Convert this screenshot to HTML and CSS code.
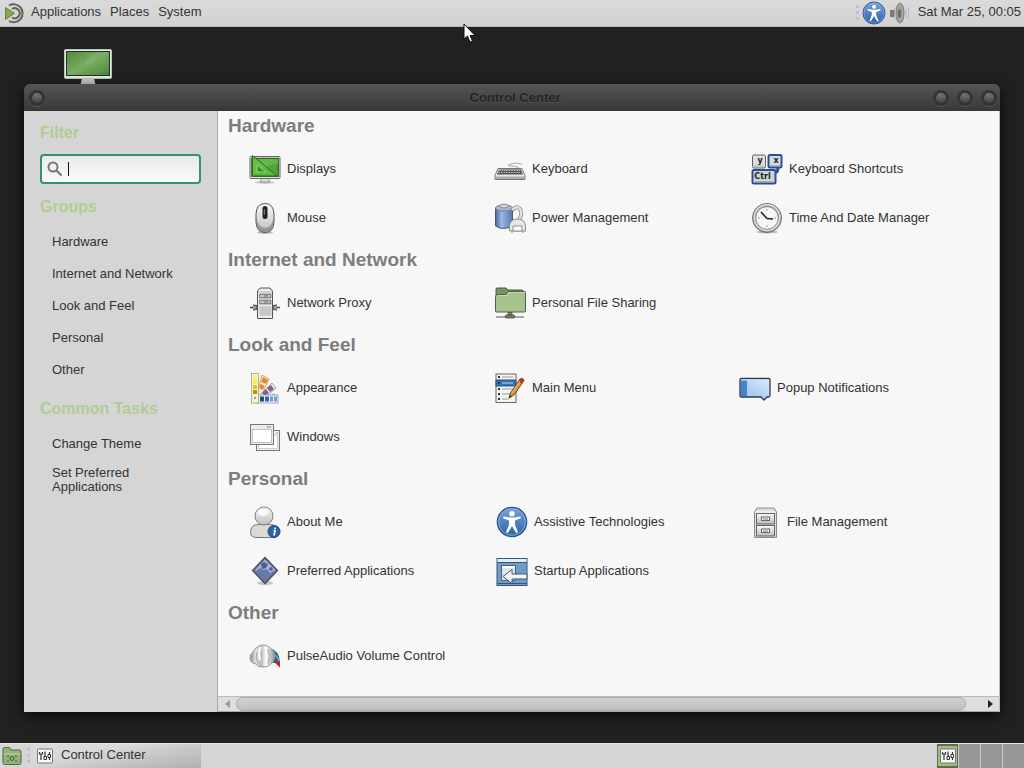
FILE: index.html
```
<!DOCTYPE html>
<html lang="en">
<head>
    <meta charset="UTF-8">
    <meta name="viewport" content="width=device-width, initial-scale=1.0">
    <title>Control Center</title>
    <link rel="stylesheet" href="styles.css">
</head>
<body>
<!-- shared gradients and symbols -->
<svg class="defs" aria-hidden="true">
    <defs>
        <linearGradient id="g-blue" x1="0" y1="0" x2="0" y2="1"><stop offset="0" stop-color="#7aa3da"/><stop offset="1" stop-color="#2c5fa8"/></linearGradient>
        <linearGradient id="g-green" x1="0" y1="0" x2="1" y2="1"><stop offset="0" stop-color="#4f8a3c"/><stop offset="0.5" stop-color="#78ad62"/><stop offset="1" stop-color="#4a8538"/></linearGradient>
        <linearGradient id="g-grey" x1="0" y1="0" x2="0" y2="1"><stop offset="0" stop-color="#fafafa"/><stop offset="1" stop-color="#bdbdb8"/></linearGradient>
        <linearGradient id="g-metal" x1="0" y1="0" x2="1" y2="0"><stop offset="0" stop-color="#8d8d8d"/><stop offset="0.25" stop-color="#e8e8e8"/><stop offset="0.45" stop-color="#b5b5b5"/><stop offset="0.65" stop-color="#fff"/><stop offset="1" stop-color="#929292"/></linearGradient>
        <linearGradient id="g-drum" x1="0" y1="0" x2="1" y2="0"><stop offset="0" stop-color="#46659f"/><stop offset="0.35" stop-color="#9db7e2"/><stop offset="1" stop-color="#5577b4"/></linearGradient>
        <linearGradient id="g-sky" x1="0" y1="1" x2="1" y2="0"><stop offset="0" stop-color="#8dbdf0"/><stop offset="1" stop-color="#dcebfa"/></linearGradient>
    </defs>
    <symbol id="access" viewBox="0 0 32 32">
        <circle cx="16" cy="16" r="14.7" fill="url(#g-blue)" stroke="#24508f" stroke-width="1.2"/>
        <circle cx="16" cy="16" r="13.4" fill="none" stroke="#93b5e2" stroke-width="0.8"/>
        <circle cx="16" cy="7.7" r="2.7" fill="#fff"/>
        <path d="M7.500 10.500l6.500 1h4l6.500-1 .4 1.800-6 2.200v4.200l3.200 7.500-2 .8L16 20l-4.100 7-2-.8 3.200-7.500v-4.200l-6-2.200z" fill="#fff"/>
    </symbol>
    <symbol id="tools" viewBox="0 0 16 16">
        <rect x="0.5" y="1" width="15" height="14" rx="1" fill="#f8f8f6" stroke="#777"/>
        <path d="M2.500 4v2h3V4M4 6v6M8 3.500V8M12.500 4v2M12.500 10v2" fill="none" stroke="#333" stroke-width="1.200"/>
        <path d="M7 8.500h2.500v3H7zM11 6.500h2.500v3H11z" fill="#fff" stroke="#333"/>
    </symbol>
</svg>

<div class="desktop">
    <header class="panel">
        <svg class="logo" viewBox="0 0 22 22" aria-hidden="true">
            <path d="M6 3.500A9 9 0 1 1 6 19" fill="none" stroke="#5d6653" stroke-width="2"/>
            <path d="M9 7A5 5 0 1 1 9 15.500" fill="none" stroke="#5d6653" stroke-width="2"/>
            <path d="M2.500 5.500l9 5.800-9 6.200z" fill="#87a752" stroke="#66803f"/>
        </svg>
        <nav class="menus">
            <button class="menu">Applications</button>
            <button class="menu">Places</button>
            <button class="menu">System</button>
        </nav>
        <div class="tray">
            <span class="grip"></span>
            <svg class="tray-icon" viewBox="0 0 32 32" aria-hidden="true"><use href="#access"/></svg>
            <svg class="tray-icon" viewBox="0 0 24 24" aria-hidden="true">
                <path d="M4 9h4v7H4z" fill="#777"/>
                <path d="M8 8.500L13 3v18L8 16.500z" fill="url(#g-metal)" stroke="#888" stroke-width="0.500"/>
                <ellipse cx="14" cy="12" rx="4" ry="10" fill="#a5a5a0" stroke="#7d7d78"/>
                <ellipse cx="13.500" cy="12.500" rx="1.700" ry="4.500" fill="#6d6d69"/>
                <path d="M20 8v8M22.500 6v12" stroke="#b3bdc9" stroke-width="1"/>
            </svg>
            <time class="clock">Sat Mar 25, 00:05</time>
        </div>
    </header>

    <main class="workspace">
        <svg class="computer" viewBox="0 0 48 38" aria-hidden="true">
            <path d="M18 29h12l2 9H16z" fill="#c8c8c8"/>
            <rect x="0.500" y="0.500" width="47" height="29" rx="1" fill="#e9ebe6" stroke="#bfc1bc"/>
            <rect x="2.500" y="2.500" width="43" height="24" fill="url(#g-green)" stroke="#22301d"/>
            <path d="M20 14Q26 4 38 3q-8 6-9 13-3-2-9-2z" fill="#8ab775" opacity=".45"/>
        </svg>

        <section class="window">
            <div class="titlebar">
                <button class="knob" aria-label="Window menu"></button>
                <h1 class="title">Control Center</h1>
                <button class="knob" aria-label="Minimize"></button>
                <button class="knob" aria-label="Maximize"></button>
                <button class="knob" aria-label="Close"></button>
            </div>
            <div class="window-body">
                <aside class="sidebar">
                    <h2 class="side-title"><label for="filter">Filter</label></h2>
                    <div class="search">
                        <svg class="search-icon" viewBox="0 0 16 16" aria-hidden="true"><circle cx="6" cy="6" r="4.500" fill="none" stroke="#777" stroke-width="2"/><path d="M9.500 9.500l5 5" stroke="#777" stroke-width="2.200"/></svg>
                        <input id="filter" class="search-input" type="text">
                        <span class="caret"></span>
                    </div>
                    <h2 class="side-title">Groups</h2>
                    <ul class="links">
                        <li><a href="#hardware">Hardware</a></li>
                        <li><a href="#internet">Internet and Network</a></li>
                        <li><a href="#look">Look and Feel</a></li>
                        <li><a href="#personal">Personal</a></li>
                        <li><a href="#other">Other</a></li>
                    </ul>
                    <h2 class="side-title">Common Tasks</h2>
                    <ul class="links tasks">
                        <li><a href="#look">Change Theme</a></li>
                        <li><a href="#personal">Set Preferred Applications</a></li>
                    </ul>
                </aside>

                <div class="content">
                    <div class="groups">
                        <section class="group hardware" id="hardware">
                            <h2>Hardware</h2>
                            <div class="items">
                                <a class="item" href="#">
                                    <svg class="icon" viewBox="0 0 32 32"><ellipse cx="16" cy="29.500" rx="10" ry="1.500" fill="#ccc"/><path d="M13 25h6l2 4H11z" fill="#ddd" stroke="#777" stroke-width=".7"/><rect x="1" y="3.500" width="30" height="22" rx="1" fill="#e8e8e4" stroke="#666"/><rect x="2.800" y="5.300" width="26.500" height="18" fill="#4fa634" stroke="#204d17"/><path d="M3 6h26v5Q17 11 10 20H3z" fill="#78bf5c" opacity=".6"/><path d="M3.500 2.500v20.500h24.500z" fill="#67c446" fill-opacity=".6" stroke="#286f17"/><path d="M8 12v7h9z" fill="#358f23" stroke="#a7df8e" stroke-width=".8"/></svg>
                                    <span>Displays</span>
                                </a>
                                <a class="item" href="#">
                                    <svg class="icon" viewBox="0 0 32 32"><path d="M25 15q-2-2-8-2t0-2 11 0" fill="none" stroke="#aaa"/><path d="M4 15.500h24l3 7v4H1v-4z" fill="#e8e8e6" stroke="#777"/><path d="M5 16.500h22l2 5H3z" fill="#555"/><path d="M5 17.500h21M4.500 19.500h23" stroke="#bbb" stroke-width="1" stroke-dasharray="1.500 1"/><path d="M1.500 23.500h29v2.500h-29z" fill="#aaa"/></svg>
                                    <span>Keyboard</span>
                                </a>
                                <a class="item" href="#">
                                    <svg class="icon" viewBox="0 0 32 32"><path d="M27 15q0 5-5 5" fill="none" stroke="#2d4f91" stroke-width="3"/><rect x="1.500" y="2" width="13" height="13" rx="1.500" fill="#dcdfdb" stroke="#5d6470"/><rect x="17.500" y="2" width="13" height="12.500" rx="1.500" fill="#d5dadd" stroke="#2d4f91" stroke-width="2"/><rect x="1.500" y="17" width="23" height="13.500" rx="1.500" fill="#cfd4d7" stroke="#2d4f91" stroke-width="2"/><path d="M3 13h10M19 12.500h10M4 28.500h18" stroke="#aab0b5" stroke-width="1"/><g class="key-text"><text x="9" y="10">y</text><text x="25" y="10">x</text><text x="11.500" y="26">Ctrl</text></g></svg>
                                    <span>Keyboard Shortcuts</span>
                                </a>
                                <a class="item" href="#">
                                    <svg class="icon" viewBox="0 0 32 32"><ellipse cx="16" cy="30.500" rx="8" ry="1.500" fill="#bbb"/><path d="M7 12Q7.500 1.500 16 1.500T25 12v8Q24.500 30.500 16 30.500T7 20z" fill="url(#g-grey)" stroke="#555"/><path d="M7.500 15v7q2 8 8.500 8t8.500-8v-7Q23 26 16 26T7.500 15z" fill="#777" opacity=".6"/><rect x="13.500" y="4" width="5" height="13" rx="2.500" fill="#222"/><path d="M15.300 7v6" stroke="#888"/></svg>
                                    <span>Mouse</span>
                                </a>
                                <a class="item" href="#">
                                    <svg class="icon" viewBox="0 0 32 32"><path d="M1.500 6v18q7 5 17 0V6z" fill="url(#g-drum)" stroke="#455778"/><ellipse cx="10" cy="6" rx="8.500" ry="3" fill="#a9bad5" stroke="#788391"/><ellipse cx="10" cy="4" rx="4" ry="2" fill="#d8dad5" stroke="#888"/><path d="M18 8q5-5 8-1t-1 11" fill="none" stroke="#8e948e" stroke-width="4"/><path d="M18 8q5-5 8-1t-1 11" fill="none" stroke="#dfe1dc" stroke-width="2.400"/><path d="M15.500 25q0-8 8-8t8 8v4h-16z" fill="#e7e7e3" stroke="#8e918b"/><path d="M19 24h9v5h-9zM18 29v2M29 29v2" fill="#fff" stroke="#8e918b"/></svg>
                                    <span>Power Management</span>
                                </a>
                                <a class="item" href="#">
                                    <svg class="icon" viewBox="0 0 32 32"><ellipse cx="16" cy="30" rx="11" ry="1.500" fill="#bbb"/><circle cx="16" cy="16" r="14.500" fill="#a3a3a0" stroke="#6f6f6d"/><circle cx="16" cy="15.500" r="12.800" fill="none" stroke="#e8e8e6" stroke-width="1.200"/><circle cx="16" cy="16" r="11.300" fill="#f6f6f4" stroke="#90908e"/><path d="M16 7v1.500M16 23.500V25M7 16h1.500M23.500 16H25" stroke="#888"/><path d="M10 10l6 6.500 6 .5" fill="none" stroke="#222" stroke-width="1.600"/></svg>
                                    <span>Time And Date Manager</span>
                                </a>
                            </div>
                        </section>

                        <section class="group" id="internet">
                            <h2>Internet and Network</h2>
                            <div class="items">
                                <a class="item" href="#">
                                    <svg class="icon" viewBox="0 0 32 32"><path d="M1 20.500h30" stroke="#444" stroke-width="1.500"/><path d="M4 18l4 .5v4l-4 .5M28 18l-4 .5v4l4 .5" fill="#999" stroke="#444"/><path d="M8.500 31.500V4L11 1h10l2.500 3v27.500z" fill="#eaeae8" stroke="#555"/><path d="M9 5h14" stroke="#bbb"/><path d="M10.500 7h11.500v4H10.500zM10.500 13h11.500v4H10.500z" fill="#999" stroke="#666" stroke-width=".6"/><path d="M12 8v2M14 8v2M19 9h2M12 14v2M14 14v2M19 15h2" stroke="#eee"/><path d="M10.500 20h12M10.500 22h12M10.500 24h12M10.500 26h12M10.500 28h12" stroke="#888" stroke-dasharray="1 1"/><path d="M11.500 21h11M11.500 23h11M11.500 25h11M11.500 27h11" stroke="#aaa" stroke-dasharray="1 1"/></svg>
                                    <span>Network Proxy</span>
                                </a>
                                <a class="item" href="#">
                                    <svg class="icon" viewBox="0 0 32 32"><path d="M2 8V2q0-1 1-1h9l2 2h14q1 0 1 1v3" fill="#789264" stroke="#495a40"/><path d="M1.500 9.500Q1.500 7.500 4 7.500h8l2-3h16.500q1 0 1 1V24q0 1-1 1h-28q-1 0-1-1z" fill="#a6c28d" stroke="#4d6241"/><path d="M3 10q0-1.500 2-1.500h8l2-3h15" fill="none" stroke="#c7dbb5"/><path d="M14 25.500h4v3h-4z" fill="#789264" stroke="#444" stroke-width=".7"/><path d="M2 30h28" stroke="#555"/><rect x="11.500" y="28" width="9" height="3" rx="1" fill="#718563" stroke="#333" stroke-width=".7"/></svg>
                                    <span>Personal File Sharing</span>
                                </a>
                            </div>
                        </section>

                        <section class="group" id="look">
                            <h2>Look and Feel</h2>
                            <div class="items">
                                <a class="item" href="#">
                                    <svg class="icon" viewBox="0 0 32 32"><path d="M7 24L13 3l7 4-9 20z" fill="#f5e6d5" stroke="#bd8d60" stroke-width=".7"/><path d="M14 5l5 3-2 4-5-2zM11.500 12l4 2-1.500 4-4-2z" fill="#e38c2b"/><path d="M8 26L23 11l4 5-16 14z" fill="#eee" stroke="#888" stroke-width=".7"/><path d="M22 13l3 4-4 3-3-4zM17 17l3 4-4 3-3-3z" fill="#80648f"/><path d="M8 29L26 21v9H8z" fill="#bbb"/><rect x="7" y="23" width="22" height="8" fill="#eef1f5" stroke="#7d8ba0" stroke-width=".7"/><path d="M11 24.500h4v5h-4z" fill="#204a87"/><path d="M16 24.500h4v5h-4z" fill="#3465a4"/><path d="M21 24.500h3v5h-3zM25 24.500h3v5h-3z" fill="#729fcf"/><rect x="2.500" y="1.500" width="7" height="29.500" fill="#f7f4d4" stroke="#9b9367" stroke-width=".7"/><path d="M4 3h4v4H4z" fill="#fff27a"/><path d="M4 8h4v4H4z" fill="#fce94f"/><path d="M4 13h4v4H4z" fill="#e1c41d"/><path d="M4 18h4v4H4z" fill="#ae9512"/><circle cx="6" cy="26" r="1" fill="#777"/></svg>
                                    <span>Appearance</span>
                                </a>
                                <a class="item" href="#">
                                    <svg class="icon" viewBox="0 0 32 32"><rect x="2" y="2" width="20" height="28.500" fill="#f4f4f2" stroke="#666"/><path d="M2 8h20v6H2z" fill="#3674b1" stroke="#245486"/><path d="M4 5h2M4 11h2M4 17h2M4 22h2M4 27h2" stroke="#333" stroke-width="2"/><path d="M8 5h11M8 17h11M8 22h9M8 27h7" stroke="#999"/><path d="M8 11h11" stroke="#b5d1eb"/><path d="M15 26l1.500-5L26 7q3-2 4 1.500L20 23z" fill="#d49447" stroke="#76451c"/><path d="M26 7q3-2 4 1.500l-2 3-4-2z" fill="#b53b26"/><path d="M15 26l1-3 1.500 1.500z" fill="#222"/><path d="M18 21l8-12" stroke="#f0c578"/></svg>
                                    <span>Main Menu</span>
                                </a>
                                <a class="item" href="#">
                                    <svg class="icon" viewBox="0 0 32 32"><path d="M2.500 6.500h27q1.500 0 1.500 1.500v15.500q0 1.500-1.500 1.500h-1.500l-3 3-3-3H2.500Q1 25 1 23.500V8q0-1.500 1.500-1.500z" fill="url(#g-sky)" stroke="#2d3b53" stroke-width="1.300"/><path d="M2 8h6v16H2z" fill="#4583d1"/><path d="M2 8h28" stroke="#d8e7f8"/></svg>
                                    <span>Popup Notifications</span>
                                </a>
                                <a class="item" href="#">
                                    <svg class="icon" viewBox="0 0 32 32"><rect x="7.500" y="9.500" width="23" height="20" fill="#eee" stroke="#777"/><rect x="9.500" y="14" width="19" height="13.500" fill="#fff" stroke="#bbb" stroke-width=".7"/><path d="M27 12h2" stroke="#999"/><rect x="1.500" y="3.500" width="23" height="20" fill="#ececea" stroke="#777"/><rect x="3.500" y="8.500" width="19" height="13" fill="#fff" stroke="#aaa" stroke-width=".7"/><path d="M18 6h1.500M20.500 6H22" stroke="#888" stroke-width="1.300"/></svg>
                                    <span>Windows</span>
                                </a>
                            </div>
                        </section>

                        <section class="group personal" id="personal">
                            <h2>Personal</h2>
                            <div class="items">
                                <a class="item" href="#">
                                    <svg class="icon" viewBox="0 0 32 32"><path d="M1.500 26.500q0-8 8-8h12q7 0 7 8 0 5-6 5H8q-6.500 0-6.500-5z" fill="#d9dad2" stroke="#777"/><circle cx="15" cy="10" r="9" fill="url(#g-grey)" stroke="#7d7d78"/><ellipse cx="14" cy="6.500" rx="5" ry="3.500" fill="#fff" opacity=".8"/><circle cx="25" cy="25.500" r="6" fill="#2864ad" stroke="#1b4378"/><path d="M26 21.500V23M24.500 24.500H26l-1 5" fill="none" stroke="#fff" stroke-width="1.700"/></svg>
                                    <span>About Me</span>
                                </a>
                                <a class="item" href="#">
                                    <svg class="icon" viewBox="0 0 32 32"><use href="#access"/></svg>
                                    <span>Assistive Technologies</span>
                                </a>
                                <a class="item" href="#">
                                    <svg class="icon" viewBox="0 0 32 32"><path d="M5.500 31.500V6L8 2h17l2.500 4v25.500z" fill="#dededa" stroke="#8b8b86"/><path d="M7 6h19" stroke="#fff"/><rect x="7.500" y="7.500" width="18" height="10.500" fill="url(#g-grey)" stroke="#666"/><rect x="7.500" y="19.500" width="18" height="10.500" fill="url(#g-grey)" stroke="#666"/><rect x="12.500" y="11" width="8" height="3.500" fill="#fff" stroke="#666"/><rect x="12.500" y="23" width="8" height="3.500" fill="#fff" stroke="#666"/><path d="M14 13h5M14 25h5" stroke="#777"/></svg>
                                    <span>File Management</span>
                                </a>
                                <a class="item" href="#">
                                    <svg class="icon" viewBox="0 0 32 32"><ellipse cx="16" cy="28" rx="8" ry="2" fill="#c5c5c5"/><path d="M16 2.500L28.500 15.500 16 28.500 3.500 15.500z" fill="#6878a7" stroke="#454b5d" stroke-width="1.300"/><path d="M16 4.500L26.500 15 21 18l-3-4-4 1-3-2-4 3-1-1z" fill="#a8b4d6"/><path d="M12 9l3-2 4 2-2 4-4 1zM20 13l3-1 1 3-3 1z" fill="#4c609b"/></svg>
                                    <span>Preferred Applications</span>
                                </a>
                                <a class="item" href="#">
                                    <svg class="icon" viewBox="0 0 32 32"><rect x="1" y="3.500" width="30" height="27" fill="#6e9ccb" stroke="#36557d"/><path d="M1.500 4h29v3h-29z" fill="#e8ebee"/><path d="M1 7.500h30M1 28.500h30" stroke="#36557d"/><path d="M5.500 10.500h14v15h-14z" fill="#dce5ee" stroke="#49627f"/><path d="M6 11h13v2H6z" fill="#fff"/><path d="M31 19H16v-4.500l-9 7 9 7V24h15z" fill="#f3f3f1" stroke="#49566a"/></svg>
                                    <span>Startup Applications</span>
                                </a>
                            </div>
                        </section>

                        <section class="group" id="other">
                            <h2>Other</h2>
                            <div class="items">
                                <a class="item" href="#">
                                    <svg class="icon" viewBox="0 0 32 32"><path d="M20 8q10 2 11 14l-7 1z" fill="#315f85"/><path d="M25 14q4 3 5 7" fill="none" stroke="#7eb0d0" stroke-width="1.500"/><path d="M24 21l7 1v5.500z" fill="#c81f24"/><path d="M4 12Q8 5 14 5t11 7q2 8-3 12-3 3.500-8 3-5 .5-7-3-6-1-6-6 0-4 3-6z" fill="url(#g-metal)" stroke="#999"/><path d="M8 12q-2 6 1 12M19 9q3 7 0 15" fill="none" stroke="#a5a5a5"/><path d="M12 7q-3 5-1 13" fill="none" stroke="#fff" stroke-width="2"/></svg>
                                    <span>PulseAudio Volume Control</span>
                                </a>
                            </div>
                        </section>
                    </div>
                    <div class="scrollbar">
                        <button class="arrow left" aria-label="Scroll left"></button>
                        <div class="track"><div class="thumb"></div></div>
                        <button class="arrow right" aria-label="Scroll right"></button>
                    </div>
                </div>
            </div>
        </section>
    </main>

    <footer class="panel taskbar">
        <button class="show-desktop" aria-label="Show desktop">
            <svg viewBox="0 0 20 20" aria-hidden="true"><path d="M1 6V3q0-1.500 1.500-1.500h5L9 4h8.500Q19 4 19 5.500v11q0 2-2 2H3q-2 0-2-2z" fill="#94b27b" stroke="#526745"/><path d="M2 8h16" stroke="#c2d7af"/><circle cx="10" cy="12.500" r="2" fill="none" stroke="#3f5533"/><path d="M5 10h2M5 15h2M13 10h2M13 15h2" stroke="#3f5533"/></svg>
        </button>
        <span class="grip"></span>
        <button class="task">
            <svg class="task-icon" viewBox="0 0 16 16" aria-hidden="true"><use href="#tools"/></svg>
            <span>Control Center</span>
        </button>
        <div class="switcher">
            <button class="space active" aria-label="Workspace 1"><svg class="task-icon" viewBox="0 0 16 16" aria-hidden="true"><use href="#tools"/></svg></button>
            <button class="space" aria-label="Workspace 2"></button>
            <button class="space" aria-label="Workspace 3"></button>
            <button class="space" aria-label="Workspace 4"></button>
        </div>
    </footer>

    <svg class="pointer" viewBox="0 0 14 20" aria-hidden="true"><path d="M1 1v15l3.500-3 2.500 6 2.500-1-2.500-5.500h5z" fill="#fff" stroke="#111"/></svg>
</div>
</body>
</html>
```
FILE: styles.css
```
* {
    margin: 0;
    padding: 0;
    box-sizing: border-box;
}
body {
    font-family: "Liberation Sans", Arial, sans-serif;
    font-size: 13px;
    color: #333;
}
button {
    border: none;
    background: none;
    font: inherit;
    color: inherit;
}
a {
    color: inherit;
    text-decoration: none;
}
ul {
    list-style: none;
}
.defs {
    position: absolute;
    width: 0;
    height: 0;
}
.desktop {
    position: relative;
    display: flex;
    flex-direction: column;
    min-height: 100vh;
    background: #20221f;
}

/* panels */
.panel {
    display: flex;
    align-items: center;
    height: 27px;
    padding: 0 3px;
    background: linear-gradient(#dadada, #d2d2d2);
    border-bottom: 1px solid #bbb;
}
.logo {
    width: 22px;
    height: 22px;
    margin-right: 6px;
}
.menus {
    display: flex;
    gap: 9px;
    padding-bottom: 3px;
}
.tray {
    display: flex;
    align-items: center;
    margin-left: auto;
}
.tray-icon {
    width: 24px;
    height: 24px;
}
.clock {
    margin-left: 8px;
    padding-bottom: 3px;
}
.grip {
    width: 3px;
    height: 16px;
    margin: 0 3px;
    background: repeating-linear-gradient(#c2c2c2 0 3px, transparent 3px 6px);
}

/* desktop area */
.workspace {
    position: relative;
    display: flex;
    flex: 1;
    padding: 57px 24px 31px;
}
.computer {
    position: absolute;
    left: 64px;
    top: 22px;
    width: 48px;
    height: 38px;
}
.pointer {
    position: absolute;
    left: 463px;
    top: 23px;
    width: 14px;
    height: 20px;
}

/* window */
.window {
    position: relative;
    display: flex;
    flex-direction: column;
    flex: 1;
    min-width: 0;
    border-radius: 6px 6px 0 0;
    box-shadow: 0 4px 14px rgba(0, 0, 0, 0.7);
}
.titlebar {
    display: flex;
    align-items: center;
    gap: 8px;
    height: 27px;
    padding: 0 3px 0 5px;
    border-radius: 6px 6px 0 0;
    background: linear-gradient(#555, #383838);
}
.title {
    flex: 1;
    padding-left: 52px;
    font-size: 13px;
    text-align: center;
    color: #252525;
    text-shadow: 0 1px 1px #555;
}
.knob {
    width: 16px;
    height: 16px;
    border: 3px solid #343434;
    border-radius: 50%;
    background: linear-gradient(#777, #444);
    box-shadow: 0 1px 0 #5a5a5a;
}
.window-body {
    display: flex;
    flex: 1;
}

/* sidebar */
.sidebar {
    width: 194px;
    flex-shrink: 0;
    padding: 12px 16px;
    background: #d5d5d5;
    border-right: 1px solid #aaa;
}
.side-title {
    font-size: 16px;
    line-height: 20px;
    color: #b0cd93;
}
.search {
    position: relative;
    display: flex;
    align-items: center;
    height: 30px;
    margin: 11px 0 13px;
    padding-left: 5px;
    border: 2px solid #34926f;
    border-radius: 4px;
    background: linear-gradient(#eaeaea, #fafafa);
}
.search-icon {
    width: 16px;
    height: 16px;
    flex-shrink: 0;
}
.search-input {
    flex: 1;
    min-width: 0;
    padding: 0 5px;
    border: none;
    outline: none;
    background: transparent;
    font: inherit;
}
.caret {
    position: absolute;
    left: 26px;
    top: 6px;
    width: 1px;
    height: 14px;
    background: #111;
}
.links {
    padding: 9px 12px 13px;
    line-height: 14px;
}
.links li {
    padding: 9px 0;
}
.tasks {
    padding-top: 10px;
}
.tasks li {
    padding: 8px 0 7px;
}

/* settings list */
.content {
    display: flex;
    flex-direction: column;
    flex: 1;
    min-width: 0;
    background: #f7f7f7;
    border-right: 1px solid #bbb;
}
.groups {
    flex: 1;
    padding-left: 10px;
}
.group {
    margin-bottom: 3px;
}
.group h2 {
    padding-bottom: 3px;
    font-size: 19px;
    line-height: 30px;
    color: #7d7d7d;
}
.items {
    display: grid;
    grid-template-columns: 245px 245px auto;
    padding-left: 21px;
}
.hardware .items {
    grid-template-columns: 245px 257px auto;
}
.personal .items {
    grid-template-columns: 247px 253px auto;
}
.item {
    display: flex;
    align-items: center;
    gap: 6px;
    height: 49px;
}
.icon {
    width: 32px;
    height: 32px;
    flex-shrink: 0;
}
.key-text {
    font: bold 8px "DejaVu Sans", sans-serif;
    text-anchor: middle;
    fill: #222;
}

/* scrollbar */
.scrollbar {
    display: flex;
    height: 16px;
    border-top: 1px solid #bbb;
    border-bottom: 1px solid #aaa;
    background: #dedede;
}
.arrow {
    display: flex;
    align-items: center;
    justify-content: center;
    width: 18px;
}
.arrow::before {
    content: "";
    border: 4px solid transparent;
}
.left::before {
    border-right: 5px solid #999;
    border-left: none;
}
.right::before {
    border-left: 5px solid #222;
    border-right: none;
}
.track {
    flex: 1;
}
.thumb {
    width: 98%;
    height: 100%;
    border: 1px solid #aaa;
    border-radius: 7px;
    background: linear-gradient(#d2d2d2, #bfbfbf);
}

/* bottom panel */
.taskbar {
    height: 25px;
    padding: 0;
    border-top: 1px solid #e6e6e6;
    border-bottom: none;
    background: #d6d6d6;
}
.show-desktop {
    width: 24px;
    height: 24px;
    padding: 2px;
}
.task {
    display: flex;
    align-items: center;
    gap: 8px;
    width: 168px;
    height: 24px;
    padding: 0 4px;
    background: linear-gradient(170deg, #dadada 30%, #b0b0b0);
}
.task span {
    padding-bottom: 3px;
}
.task-icon {
    width: 16px;
    height: 16px;
}
.switcher {
    display: flex;
    gap: 1px;
    margin-left: auto;
    background: #ccc;
}
.space {
    display: flex;
    align-items: center;
    justify-content: center;
    width: 21px;
    height: 24px;
    background: #979797;
}
.active {
    background: #a5b88d;
    border: solid #5c7048;
    border-width: 2px 1px;
}

@media (max-width: 760px) {
    .items,
    .hardware .items,
    .personal .items {
        grid-template-columns: 1fr;
    }
}
```
